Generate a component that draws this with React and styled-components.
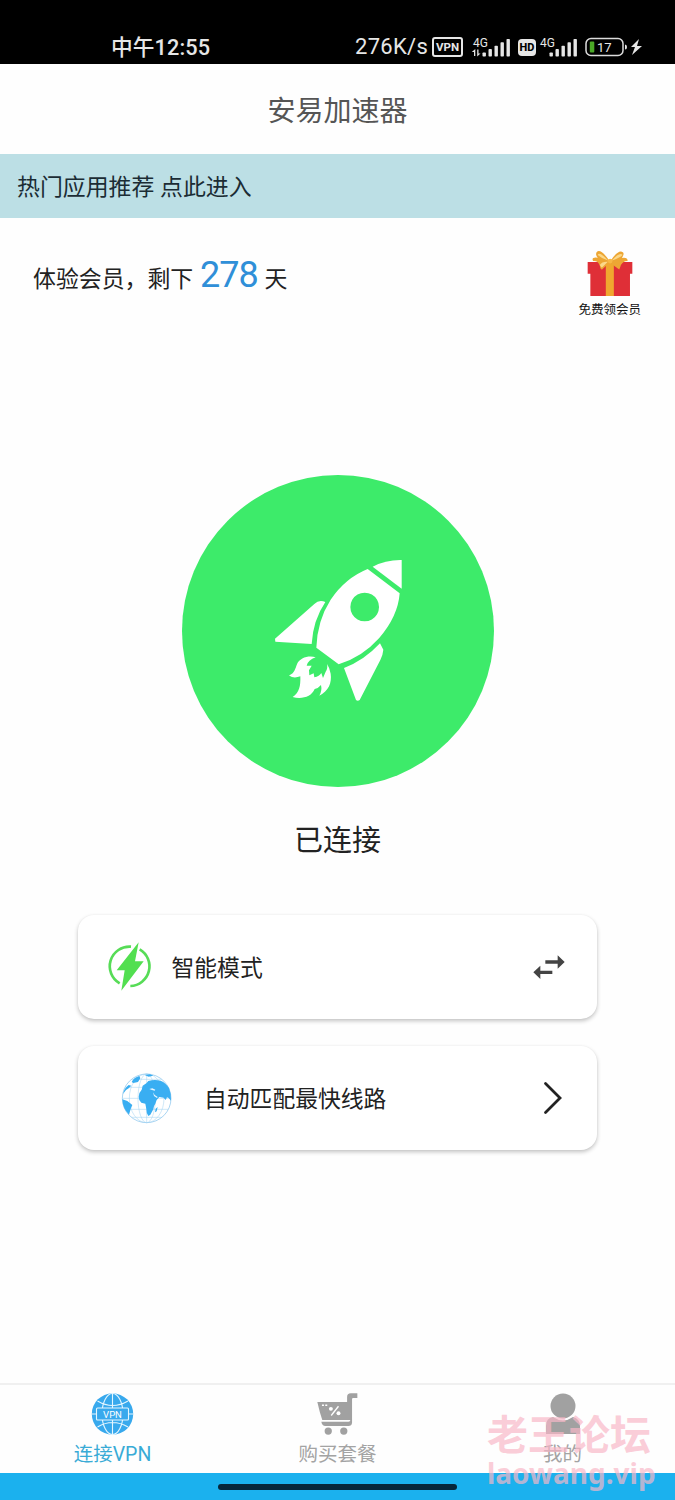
import React from "react";
import styled, { createGlobalStyle } from "styled-components";

const GlobalStyle = createGlobalStyle`
  * { box-sizing: border-box; }
  body { margin: 0; background: #fefefe; }
  svg { display: block; flex: none; overflow: visible; }
`;

const Screen = styled.div`
  position: relative;
  width: 675px;
  height: 1500px;
  display: flex;
  flex-direction: column;
  background: #fefefe;
  color: #222;
  font-family: Roboto, "Noto Sans CJK SC", sans-serif;
  overflow: hidden;
  white-space: nowrap;
`;

const StatusBar = styled.header`
  height: 64px;
  flex: none;
  padding: 30px 33px 0 111px;
  background: #000;
  color: #e6e6e6;
  display: flex;
  justify-content: space-between;
`;

const Clock = styled.div`
  height: 34px;
  line-height: 36px;
  font-size: 21.7px;
  font-weight: 500;
  letter-spacing: 0.1px;
`;

const StatusIcons = styled.div`
  height: 34px;
  display: flex;
  align-items: center;
`;

const Speed = styled.span`
  width: 77px;
  font-size: 22px;
  line-height: 34px;
  letter-spacing: 0.3px;
`;

const VpnBadge = styled.span`
  width: 31px;
  height: 20px;
  border: 2px solid #e6e6e6;
  border-radius: 3px;
  font-size: 11.5px;
  font-weight: 700;
  line-height: 17px;
  text-align: center;
`;

const HdBadge = styled.span`
  width: 18px;
  height: 17px;
  margin: 0 4px 0 7px;
  border-radius: 4px;
  background: #e6e6e6;
  color: #000;
  font-size: 11px;
  font-weight: 800;
  line-height: 17px;
  text-align: center;
`;

const TitleBar = styled.div`
  height: 90px;
  flex: none;
  display: flex;
  align-items: center;
  justify-content: center;
  font-size: 28px;
  color: #555;
`;

const Banner = styled.div`
  height: 64px;
  flex: none;
  padding: 0 16px 0 17px;
  background: #bcdfe5;
  color: #1b2c34;
  font-size: 22.9px;
  line-height: 68px;
`;

const Membership = styled.section`
  height: 102px;
  flex: none;
  padding: 32px 34px 0 33px;
  display: flex;
  justify-content: space-between;
`;

const Remaining = styled.p`
  margin: 0;
  height: 50px;
  line-height: 51px;
  font-size: 22.9px;
`;

const Days = styled.span`
  margin: 0 1px 0 1px;
  font-size: 36px;
  letter-spacing: -0.9px;
  color: #2f8fd8;
`;

const Gift = styled.div`
  display: flex;
  flex-direction: column;
  align-items: center;
  font-size: 12.5px;
  line-height: 20px;
  color: #111;
  gap: 3px;
`;

const Connect = styled.section`
  padding-top: 155px;
  display: flex;
  flex-direction: column;
  align-items: center;
`;

const PowerButton = styled.div`
  width: 312px;
  height: 312px;
  border-radius: 50%;
  background: #3deb6a;
  padding: 70px 0 0 78px;
`;

const State = styled.div`
  margin-top: 34px;
  height: 40px;
  line-height: 40px;
  font-size: 29px;
`;

const Options = styled.section`
  padding: 54px 78px 0;
  display: flex;
  flex-direction: column;
  gap: 27px;
`;

const Option = styled.div`
  height: 104px;
  padding: 0 ${(p) => p.$right}px 0 ${(p) => p.$left}px;
  border-radius: 16px;
  background: #fff;
  box-shadow: 0 2px 4px rgba(0, 0, 0, 0.24), 0 0 2px rgba(0, 0, 0, 0.03);
  display: flex;
  align-items: center;
  font-size: 22.8px;
`;

const OptionLabel = styled.span`
  flex: 1;
  margin-left: ${(p) => p.$gap}px;
  padding-top: 3px;
  line-height: 34px;
`;

const Tabs = styled.nav`
  margin-top: auto;
  height: 90px;
  flex: none;
  border-top: 2px solid #f0f0f0;
  display: grid;
  grid-template-columns: repeat(3, 1fr);
`;

const Tab = styled.div`
  padding-top: 8px;
  display: flex;
  flex-direction: column;
  align-items: center;
  gap: 5px;
  font-size: 19.5px;
  line-height: 30px;
  color: ${(p) => (p.$active ? "#39abd6" : "#a3a3a3")};
`;

const GestureBar = styled.footer`
  height: 27px;
  flex: none;
  padding-top: 11px;
  background: #1bb1ee;
`;

const Handle = styled.div`
  width: 239px;
  height: 6px;
  margin: 0 auto;
  border-radius: 3px;
  background: #06263a;
`;

const Watermark = styled.div`
  position: absolute;
  left: 487px;
  top: 1406px;
  color: rgba(249, 183, 199, 0.69);
  font-family: "Noto Sans", "Noto Sans CJK SC", sans-serif;
  font-weight: 700;
`;

const WatermarkName = styled.div`
  font-size: 41px;
  line-height: 56px;
  height: 49px;
`;

const WatermarkSite = styled.div`
  font-size: 28px;
  line-height: 36px;
`;

const Signal = ({ data }) => (
  <svg width={data ? 40 : 38} height="22" viewBox={data ? "0 0 40 22" : "2 0 38 22"} fill="#e6e6e6">
    <text x="2" y="10.500" fontSize="12" fontFamily="Roboto">4G</text>
    {data && <path d="M3 20v-4H.8L4.300 13V20zM6.200 13.500h1.300v4h2L6.200 20.500z" />}
    {[0, 1, 2, 3, 4].map((i) => (
      <rect key={i} x={11.5 + i * 6} y={16.5 - i * 3.4} width="3.4" height={4 + i * 3.4} rx="0.8" />
    ))}
  </svg>
);

const Battery = () => (
  <svg width="56" height="20" viewBox="0 0 56 20">
    <rect x="0" y="1.500" width="37" height="17" rx="5" fill="none" stroke="#dcdcdc" strokeWidth="1.5" />
    <rect x="3.800" y="4.500" width="4.500" height="11" rx="1" fill="#4aa827" />
    <text x="11" y="14.800" fontSize="13" fontFamily="Roboto" fill="#e6e6e6">17</text>
    <path d="M39 7.5q2 0 2 2.5t-2 2.5z" fill="#e6e6e6" />
    <path d="M53 2l-8 8h4l-3 8 10-9h-5z" fill="#e6e6e6" />
  </svg>
);

const GiftIcon = () => (
  <svg width="46" height="47" viewBox="80 32 137 138">
    <path d="M82 67h133v35h-7v66H90v-66h-8z" fill="#df2f37" />
    <path d="M136 67h24v101h-24z" fill="#f0a72f" />
    <path d="M146 62Q120 25 109 37Q104 45 112 54Q92 51 98 64Q112 62 118 77Q120 90 125 89L147 68L176 89Q180 80 181 76Q190 62 201 64Q201 52 184 55Q194 39 184 36Q172 31 151 62z" fill="#eda634" />
    <path d="M143 62Q124 57 112 46Q116 34 143 62M154 62Q178 55 186 46Q179 35 154 62M118 76Q124 65 142 66L124 84M158 67L178 82" fill="#fbd889" />
    <circle cx="149" cy="64" r="7" fill="#f7b846" />
  </svg>
);

const Rocket = () => (
  <svg width="160" height="170" viewBox="0 0 480 510" fill="#fff">
    <path d="M338 65Q378 44 425 45V131Z" />
    <path fillRule="evenodd" d="M323 72L419 145Q414 214 357 280Q306 337 236 358L169 308Q172 226 212 164Q256 99 323 72ZM314 143a43 43 0 1 0 .1 0Z" />
    <path d="M45 281L163 177Q177 163 196 171Q159 226 155 297L46 290Z" />
    <path d="M252 369Q313 346 360 295L370 314Q369 328 361 345L299 465Q293 470 288 465Z" />
    <path d="M167 337C147 331 119 337 110 360C104 379 99 387 87 391C98 400 110 398 121 394C122 423 118 443 98 456C125 464 155 455 164 432Q176 429 183 420Q187 437 178 452C206 438 216 413 212 386Q209 368 201 357Q204 371 197 380L189 399L184 384Q178 394 163 397L161 385L148 391L147 376L155 362L140 362Q144 345 167 337Z" />
  </svg>
);

const BoltIcon = () => (
  <svg width="44" height="50" viewBox="114 112 132 150">
    <path d="M183 126A59 59 0 0 0 149 236M209 134A59 59 0 0 1 181 244" fill="none" stroke="#57dc57" strokeWidth="8" />
    <path d="M206 113L140 197H164L154 258L221 170H195Z" fill="#52df50" />
  </svg>
);

const SwapIcon = () => (
  <svg width="32" height="24" viewBox="100 148 94 72" fill="#444">
    <path d="M136 164h37v-15l21 20-21 20v-15h-37zM157 195h-36v-15l-21 20 21 20v-15h36z" />
  </svg>
);

const ChevronIcon = () => (
  <svg width="20" height="34" viewBox="0 0 20 34">
    <path d="M2.5 2.5L17 17L2.5 31.500" fill="none" stroke="#222" strokeWidth="2.8" strokeLinecap="round" />
  </svg>
);

const EarthIcon = () => (
  <svg width="51" height="51" viewBox="153 97 153 153">
    <g fill="none" stroke="#a5d3f2" strokeWidth="1.6">
      <circle cx="230" cy="173" r="73" stroke="#7fc0ec" strokeWidth="2" />
      <path d="M157 173H303M166 140H294M166 206H294M185 116H275M185 230H275M230 100V246" />
      <ellipse cx="230" cy="173" rx="26" ry="73" />
      <ellipse cx="230" cy="173" rx="52" ry="73" />
    </g>
    <g fill="#39aef2">
      <path d="M215 147L218 135L229 128L235 121Q252 116 272 120Q288 127 297 142Q304 158 303 180L296 172L291 170L287 178L281 171L268 169L260 178L256 189Q250 196 250 206L241 222L235 226Q229 218 229 205L226 189L214 186Q206 180 206 168Q206 156 213 150Z" />
      <path d="M157 176L172 181L187 193L182 205L177 222Q158 204 157 176ZM159 160Q163 142 176 133L184 135L176 143L168 148ZM185 124Q191 110 208 106L211 113L204 124L190 127ZM224 103L240 101L250 105L236 108ZM257 204l6-5-3 13-5 3z" />
    </g>
    <path d="M238 145l9-2 9 4-2 3-8-2zM249 155l5 8 9 6-2 3-9-6z" fill="#e8f6ff" />
  </svg>
);

const VpnGlobeIcon = () => (
  <svg width="42" height="42" viewBox="0 0 42 42">
    <circle cx="20.500" cy="21" r="20.700" fill="#38a9ed" />
    <g fill="none" stroke="#e4f6ff" strokeWidth="1.1">
      <path d="M20.500 0V42M0 21H41M5.500 8Q20.500 17 36 8M5.500 34Q20.500 25 36 34" />
      <ellipse cx="20.500" cy="21" rx="10.500" ry="20.500" />
    </g>
    <rect x="4.500" y="15" width="32" height="12" rx="1" fill="#38a9ed" stroke="#e4f6ff" strokeWidth="1.1" />
    <text x="20.500" y="24.500" textAnchor="middle" fontSize="9.500" fontFamily="Roboto" fill="#fff">VPN</text>
  </svg>
);

const CartIcon = () => (
  <svg width="42" height="42" viewBox="773 54 123 127" fill="#a1a1a1">
    <path d="M772 81H862V66Q862 55 873 55H893V69H880Q877 69 877 73V136H787Q779 112 772 81Z" />
    <path d="M784 141H866Q872 141 872 135H877V144Q876 154 866 154H796Q787 154 784 141Z" />
    <circle cx="805" cy="169" r="11" />
    <circle cx="852" cy="169" r="11" />
    <path d="M786 91h6m4 0h6" stroke="#fff" strokeWidth="4" />
    <g fill="#fff">
      <path d="M836 94L814 122" stroke="#fff" strokeWidth="4" />
      <circle cx="813" cy="102" r="6" />
      <circle cx="836" cy="115" r="6" />
    </g>
  </svg>
);

const UserIcon = () => (
  <svg width="42" height="42" viewBox="0 0 42 42" fill="#a1a1a1">
    <circle cx="21" cy="13" r="12.500" />
    <path d="M4 41V33Q4 25 11 24Q21 31 31 24Q38 26 38 33V41Z" />
  </svg>
);

export default function App() {
  return (
    <Screen>
      <GlobalStyle />
      <StatusBar>
        <Clock>中午12:55</Clock>
        <StatusIcons>
          <Speed>276K/s</Speed>
          <VpnBadge>VPN</VpnBadge>
          <svg width="8" height="1" />
          <Signal data />
          <HdBadge>HD</HdBadge>
          <Signal />
          <svg width="8" height="1" />
          <Battery />
        </StatusIcons>
      </StatusBar>
      <TitleBar>安易加速器</TitleBar>
      <Banner>热门应用推荐 点此进入</Banner>
      <Membership>
        <Remaining>
          体验会员，剩下 <Days>278</Days> 天
        </Remaining>
        <Gift>
          <GiftIcon />
          <span>免费领会员</span>
        </Gift>
      </Membership>
      <Connect>
        <PowerButton>
          <Rocket />
        </PowerButton>
        <State>已连接</State>
      </Connect>
      <Options>
        <Option $left={30} $right={32}>
          <BoltIcon />
          <OptionLabel $gap={19.5}>智能模式</OptionLabel>
          <SwapIcon />
        </Option>
        <Option $left={43} $right={34}>
          <EarthIcon />
          <OptionLabel $gap={32}>自动匹配最快线路</OptionLabel>
          <ChevronIcon />
        </Option>
      </Options>
      <Tabs>
        <Tab $active>
          <VpnGlobeIcon />
          <span>连接VPN</span>
        </Tab>
        <Tab>
          <CartIcon />
          <span>购买套餐</span>
        </Tab>
        <Tab>
          <UserIcon />
          <span>我的</span>
        </Tab>
      </Tabs>
      <GestureBar>
        <Handle />
      </GestureBar>
      <Watermark>
        <WatermarkName>老王论坛</WatermarkName>
        <WatermarkSite>laowang.vip</WatermarkSite>
      </Watermark>
    </Screen>
  );
}
